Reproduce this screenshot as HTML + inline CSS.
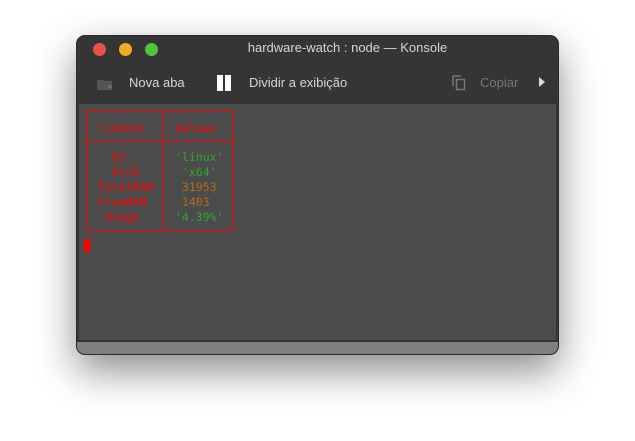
<!DOCTYPE html>
<html><head><style>
body{margin:0;width:635px;height:441px;background:#fff;position:relative;overflow:hidden;font-family:"Liberation Sans",sans-serif}
.win{position:absolute;left:76px;top:35px;width:483px;height:320px;background:#353535;border-radius:9px;box-shadow:0 16px 40px rgba(0,0,0,.45);overflow:hidden;border:1px solid #2a2a2a;box-sizing:border-box}
.dot{position:absolute;top:7px;width:13px;height:13px;border-radius:50%}
.title{position:absolute;left:0;right:0;top:4px;text-align:center;color:#d6d6d6;font-size:13px;padding-left:60px}
.tb{position:absolute;top:39px;color:#d6d6d6;font-size:13px}
.term{position:absolute;left:2px;top:68px;width:477px;height:238px;background:#4b4b4b}
.bot{position:absolute;left:0;right:0;bottom:0;height:12px;background:#7f7f7f;border-top:2px solid #333}
.m{position:absolute;font-family:"DejaVu Sans Mono","Liberation Mono",monospace;font-size:11.5px;line-height:15px;white-space:pre}
.r{color:#f00}.g{color:#2ea82e}.o{color:#b86a1c}
</style></head><body>
<div class="win">
<div class="dot" style="left:16px;background:#e8514c"></div>
<div class="dot" style="left:42px;background:#f0ae1c"></div>
<div class="dot" style="left:68px;background:#52c63a"></div>
<div class="title">hardware-watch : node — Konsole</div>
<svg style="position:absolute;left:19px;top:41px" width="18" height="14"><path d="M1 3h6l1 1h8v9H1z" fill="#555"/><path d="M12 10h4M14 8v4" stroke="#777" stroke-width="1"/></svg>
<div class="tb" style="left:52px">Nova aba</div>
<div style="position:absolute;left:140px;top:39px;width:6px;height:16px;background:#fff"></div>
<div style="position:absolute;left:148px;top:39px;width:6px;height:16px;background:#fff"></div>
<div class="tb" style="left:172px">Dividir a exibição</div>
<svg style="position:absolute;left:375px;top:39px" width="14" height="16"><path d="M1 1h8M1 1v10" stroke="#777" stroke-width="1.5" fill="none"/><rect x="4.5" y="4.5" width="8" height="10" stroke="#777" stroke-width="1.5" fill="none"/></svg>
<div class="tb" style="left:403px;color:#777">Copiar</div>
<svg style="position:absolute;left:461px;top:40px" width="8" height="12"><path d="M1 1l6 5-6 5z" fill="#ddd"/></svg>
<div class="term">
<div style="position:absolute;left:7px;top:7px;width:147px;height:120px;border:1px solid #f00;box-sizing:border-box"></div>
<div style="position:absolute;left:84px;top:7px;width:1px;height:120px;background:#f00"></div>
<div style="position:absolute;left:7px;top:37px;width:147px;height:1px;background:#f00"></div>
<div class="m r" style="left:19px;top:17px">(index)</div>
<div class="m r" style="left:96px;top:17px">Values</div>
<div class="m r" style="left:19px;top:46px">  OS
  Arch
TotalRAM
FreeRAM
 Usage</div>
<div class="m" style="left:96px;top:46px"><span class="g">'linux'</span>
<span class="g"> 'x64'</span>
<span class="o"> 31953</span>
<span class="o"> 1403</span>
<span class="g">'4.39%'</span></div>
<div style="position:absolute;left:5px;top:135px;width:6px;height:13px;background:#f00"></div>
</div>
<div class="bot"></div>
</div>
</body></html>
